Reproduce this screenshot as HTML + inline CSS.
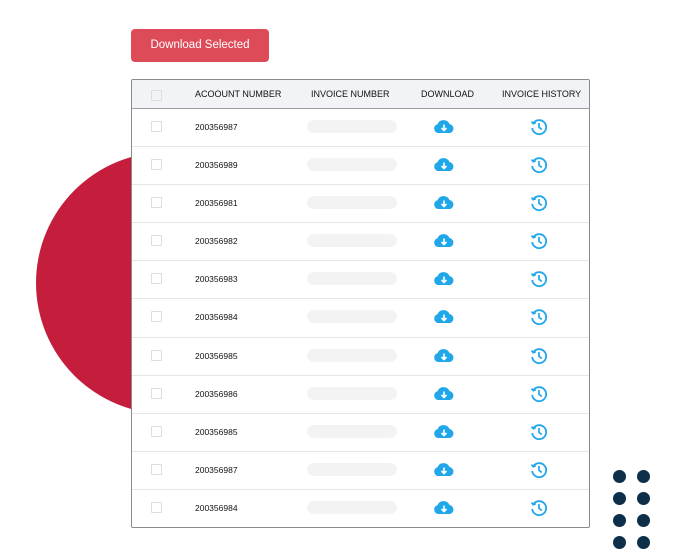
<!DOCTYPE html>
<html><head><style>
body{margin:0;width:700px;height:557px;background:#fff;position:relative;overflow:hidden;font-family:"Liberation Sans",sans-serif}
.circ{position:absolute;left:36px;top:152px;width:262px;height:262px;border-radius:50%;background:#c41e3c}
.btn{position:absolute;left:131px;top:29px;width:138px;height:33px;background:#dd4b59;border-radius:4px;color:#fff;font-size:11.5px;text-align:center;line-height:33px}
.tbl{position:absolute;left:131px;top:79px;width:457px;height:447px;background:#fff;border:1px solid #8a8a8a;border-radius:2px;overflow:hidden}
.hd{height:28px;background:#f1f3f6;border-bottom:1px solid #a0a0a0;position:relative;font-size:9px;color:#111}
.row{height:37.1px;border-bottom:1px solid #e6e6e6;position:relative;font-size:8.5px;color:#111}
.row:last-child{border-bottom:none}
.cb{position:absolute;left:19px;width:9px;height:9px;border:1px solid #ddd;border-radius:1px;background:#fff}
.hd span,.row span{position:absolute}
.pill{position:absolute;left:175px;top:11px;width:90px;height:13px;border-radius:7px;background:#f3f3f3}
.dl{position:absolute;left:301px;top:10px}
.hi{position:absolute;left:398px;top:9px}
.dot{position:absolute;width:13px;height:13px;border-radius:50%;background:#0d2f4a}
</style></head><body>
<div class="circ"></div>
<div class="btn">Download Selected</div>
<div class="tbl">
<div class="hd"><div class="cb" style="top:10px;background:#f1f3f6"></div>
<span style="left:63px;top:9px">ACOOUNT NUMBER</span>
<span style="left:179px;top:9px">INVOICE NUMBER</span>
<span style="left:289px;top:9px">DOWNLOAD</span>
<span style="left:370px;top:9px">INVOICE HISTORY</span></div>
<div id="rows"></div>
</div>
<div class="dot" style="left:613px;top:470px"></div><div class="dot" style="left:637px;top:470px"></div>
<div class="dot" style="left:613px;top:492px"></div><div class="dot" style="left:637px;top:492px"></div>
<div class="dot" style="left:613px;top:514px"></div><div class="dot" style="left:637px;top:514px"></div>
<div class="dot" style="left:613px;top:536px"></div><div class="dot" style="left:637px;top:536px"></div>
<script>
var n=["200356987","200356989","200356981","200356982","200356983","200356984","200356985","200356986","200356985","200356987","200356984"],h="";
n.forEach(function(x){h+='<div class="row"><div class="cb" style="top:12px"></div><span style="left:63px;top:13px">'+x+'</span><div class="pill"></div>'+
'<svg class="dl" width="22" height="15" viewBox="0 0 22 15"><path d="M5 14 A4.5 4.5 0 0 1 4.5 5.2 A6.5 6.5 0 0 1 16.5 5 A4.6 4.6 0 0 1 17 14 Z" fill="#1fa7ea"/><path d="M11 5.5V11M8.5 9L11 11.5L13.5 9" stroke="#fff" stroke-width="1.6" fill="none"/></svg>'+
'<svg class="hi" width="18" height="18" viewBox="0 0 18 18"><path d="M3.2 5.5A7 7 0 1 1 2.2 10" stroke="#1fa7ea" stroke-width="1.8" fill="none"/><path d="M1.5 3.5L3.2 5.8L5.8 4.8" stroke="#1fa7ea" stroke-width="1.6" fill="none"/><path d="M9 5V9.3L11.8 11.5" stroke="#1fa7ea" stroke-width="1.7" fill="none"/></svg></div>'});
document.getElementById("rows").innerHTML=h;
</script>
</body></html>
